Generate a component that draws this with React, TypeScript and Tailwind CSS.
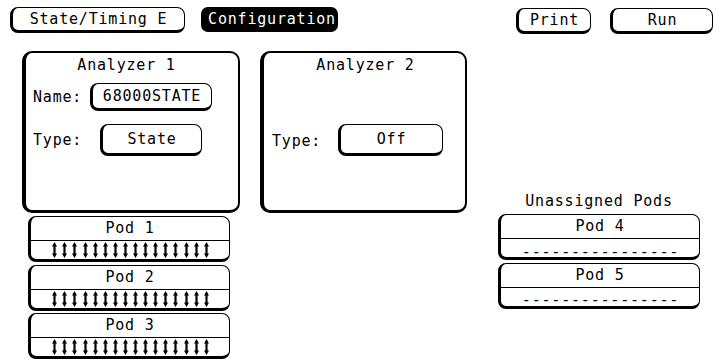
import React from "react";

const PODS_ASSIGNED = ["Pod 1", "Pod 2", "Pod 3"];
const PODS_FREE = ["Pod 4", "Pod 5"];

function Key({
  children,
  className = "",
}: {
  children: React.ReactNode;
  className?: string;
}) {
  return (
    <div
      className={`flex items-center justify-center rounded-[8px] border-[1.5px] border-black border-l-[3px] border-b-[3px] ${className}`}
    >
      {children}
    </div>
  );
}

function Arrow() {
  return (
    <svg width="5" height="16" viewBox="0 0 5 16" className="block">
      <path
        d="M2.5 0 L5 4.5 L3.6 4.5 L3.6 11.5 L5 11.5 L2.5 16 L0 11.5 L1.4 11.5 L1.4 4.5 L0 4.5 Z"
        fill="#000"
      />
    </svg>
  );
}

function Pod({ label, assigned }: { label: string; assigned: boolean }) {
  return (
    <div className="w-[202px] h-[46px] rounded-[8px] border border-black border-l-[3px] border-b-[3px] flex flex-col overflow-hidden">
      <div className="h-[23px] flex items-center justify-center">{label}</div>
      <div className="flex-1 border-t border-black flex items-center justify-center">
        {assigned ? (
          <div className="flex gap-[5.1px] pl-[1px]">
            {Array.from({ length: 16 }).map((_, i) => (
              <Arrow key={i} />
            ))}
          </div>
        ) : (
          <span className="leading-[10px] mt-[7px] ml-[1px]">----------------</span>
        )}
      </div>
    </div>
  );
}

export default function App() {
  return (
    <div className="w-[716px] h-[359px] bg-white text-black overflow-hidden font-['DejaVu_Sans_Mono',monospace] text-[15px] tracking-[0.8px]">
      {/* softkey row */}
      <div className="flex items-start pt-[7px] pl-[10px]">
        <Key className="w-[175px] h-[26px]">State/Timing E</Key>
        <div className="ml-[18px] w-[135px] h-[25px] rounded-[7px] bg-black text-white flex items-center justify-center border-l-[3px] border-black shadow-[-2px_0_0_#000]">
          Configuration
        </div>
        <Key className="ml-[178px] mt-[1px] w-[75px] h-[26px]">Print</Key>
        <Key className="ml-[19px] mt-[1px] w-[103px] h-[26px]">Run</Key>
      </div>

      <div className="flex items-start mt-[17px]">
        {/* analyzer 1 + its pods */}
        <div className="ml-[22px] w-[218px] flex flex-col">
          <div className="h-[162px] rounded-[10px] border-2 border-black border-l-[4px] border-b-[3px] flex flex-col pt-[3px] pl-[7px]">
            <div className="h-[18px] leading-[18px] text-center pr-[18px]">Analyzer 1</div>
            <div className="mt-[9px] flex items-center">
              <span className="w-[49px]">Name:</span>
              <Key className="ml-[8px] w-[122px] h-[28px]">68000STATE</Key>
            </div>
            <div className="mt-[13px] flex items-center">
              <span className="w-[49px]">Type:</span>
              <Key className="ml-[18px] w-[102px] h-[32px]">State</Key>
            </div>
          </div>
          <div className="mt-[3px] ml-[6px] flex flex-col gap-[2.5px]">
            {PODS_ASSIGNED.map((p) => (
              <Pod key={p} label={p} assigned />
            ))}
          </div>
        </div>

        {/* analyzer 2 */}
        <div className="ml-[20px] w-[207px] h-[162px] rounded-[10px] border-2 border-black border-l-[4px] border-b-[3px] flex flex-col pt-[3px] pl-[8px]">
          <div className="h-[18px] leading-[18px] text-center pr-[6px]">Analyzer 2</div>
          <div className="mt-[50px] flex items-center">
            <span className="w-[49px] mt-[2px]">Type:</span>
            <Key className="ml-[17px] w-[105px] h-[32px]">Off</Key>
          </div>
        </div>

        {/* unassigned pods */}
        <div className="ml-[31px] w-[202px] flex flex-col">
          <div className="mt-[141px] h-[18px] leading-[18px] text-center">Unassigned Pods</div>
          <div className="mt-[4px] flex flex-col gap-[2.5px]">
            {PODS_FREE.map((p) => (
              <Pod key={p} label={p} assigned={false} />
            ))}
          </div>
        </div>
      </div>
    </div>
  );
}
